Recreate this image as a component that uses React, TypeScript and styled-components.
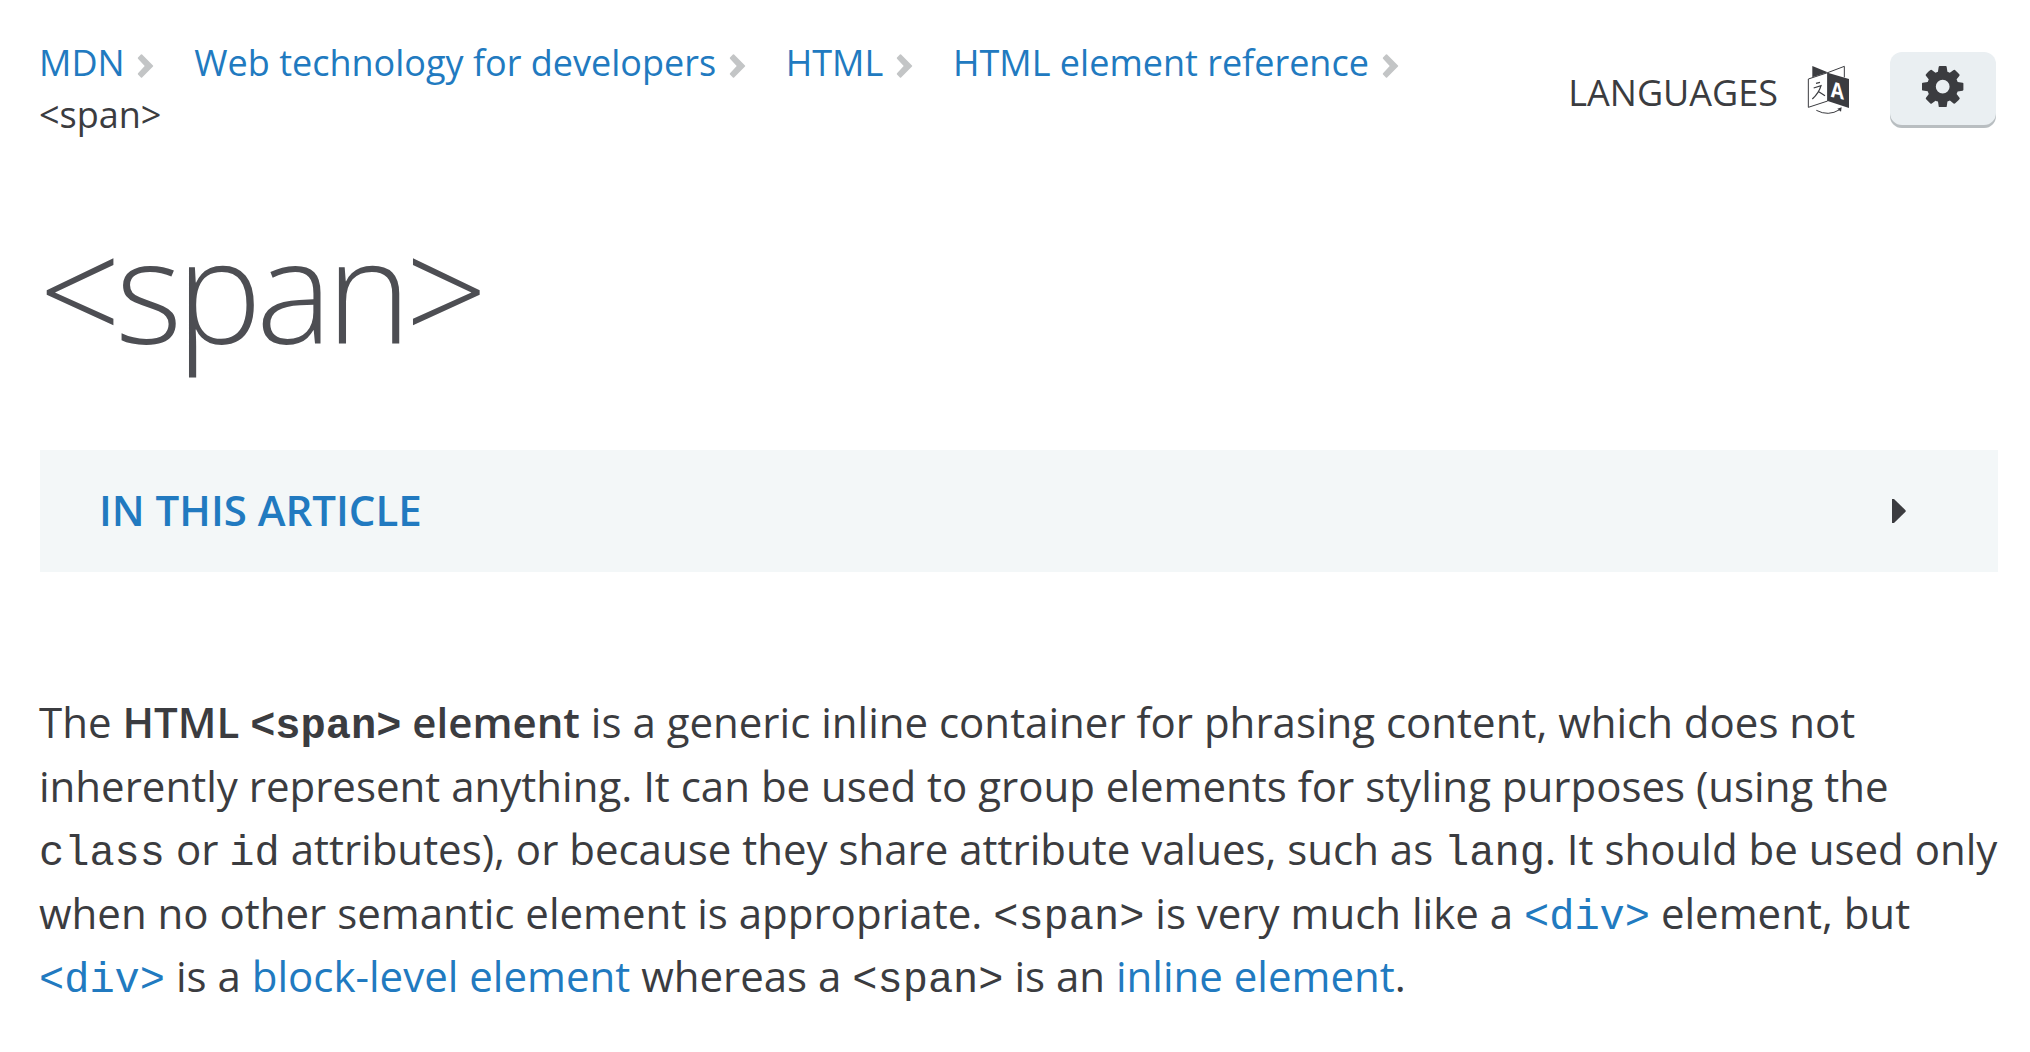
import React from "react";
import styled, { createGlobalStyle } from "styled-components";

const ink = "#3b3c40";
const blue = "#217ac0";

const Global = createGlobalStyle`
  * { box-sizing: border-box; }
  body { margin: 0; background: #fff; color: ${ink}; font-family: "Open Sans", sans-serif; }
`;
const Page = styled.main`
  width: 2030px; height: 1052px; padding: 37px 32px 0 39px; overflow: hidden;
`;
const Header = styled.header`
  display: flex; justify-content: space-between; height: 179px;
`;
const Crumbs = styled.nav`
  font-size: 36px; line-height: 52px; white-space: nowrap;
`;
const CrumbRow = styled.div`display: flex; align-items: center;`;
const Link = styled.a`color: ${blue}; text-decoration: none;`;
const Chevron = styled.svg`width: 17px; height: 24px; margin: 6px 40px 0 12.7px; fill: #c3c5c6;`;
const Tools = styled.div`display: flex; align-items: center; height: 76px; margin: 15px 2px 0 0;`;
const Language = styled.span`font-size: 36px; line-height: 76px; padding-top: 5px; margin-right: 29px;`;
const LangIcon = styled.svg`width: 43px; height: 50px; margin-right: 40px;`;
const GearButton = styled.button`
  width: 106px; height: 76px; border: 0; border-radius: 12px; box-shadow: inset 0 -3px 0 #b9bec1;
  background: #eaeff2; display: flex; align-items: center; justify-content: center; padding: 0 0 7px;
`;
const Gear = styled.svg`width: 41.4px; height: 41.4px; fill: ${ink};`;
const Title = styled.h1`
  margin: 0; height: 234px; font-size: 144px; font-weight: 300; line-height: 144px; letter-spacing: -6px; color: #4d4e53;
`;
const Toc = styled.section`
  height: 122px; margin-left: 1px; background: #f3f7f8; padding: 0 92px 0 59px; display: flex; align-items: center; justify-content: space-between;
`;
const TocTitle = styled.h2`margin: 0; padding-bottom: 3px; color: ${blue}; font-size: 42px; font-weight: 600;`;
const Arrow = styled.svg`width: 14px; height: 24px; fill: ${ink};`;
const Article = styled.p`
  margin: 118px 0 0; font-size: 42px; line-height: 63.5px; white-space: nowrap;
`;
const Strong = styled.strong`font-weight: 600;`;
const Code = styled.code`font-family: "Liberation Mono", monospace; font-size: 42px; line-height: 1;`;
const BoldCode = styled(Code)`font-weight: 700;`;

const crumbs = ["MDN", "Web technology for developers", "HTML", "HTML element reference"];

export default function App() {
  return (
    <Page>
      <Global />
      <Header>
        <Crumbs>
          <CrumbRow>
            {crumbs.map((crumb) => (
              <React.Fragment key={crumb}>
                <Link>{crumb}</Link>
                <Chevron viewBox="0 0 17 24"><path d="M1 3.500Q0.500 4 1 4.700L7.700 12 1 19.300Q0.500 20 1 20.500L3.900 23.400Q4.500 24 5.100 23.400L16 12.600Q16.500 12 16 11.400L5.100 0.600Q4.500 0 3.900 0.600Z" /></Chevron>
              </React.Fragment>
            ))}
          </CrumbRow>
          <div>&lt;span&gt;</div>
        </Crumbs>
        <Tools>
          <Language>LANGUAGES</Language>
          <LangIcon viewBox="51 42 129 150">
            <g fill={ink}>
              <path d="M67 45 113 64 67 79Z" />
              <path d="M113 65 177 84V171L113 150Z" />
              <path d="M142 173 155 169 153 182Z" />
            </g>
            <g fill="none" stroke={ink} strokeWidth="3">
              <path d="M113 65 163 46V79" />
              <path d="M55 84 113 65V150L55 169Z" />
              <path d="M79 178Q115 197 149 176" />
              <path d="M78 97 90 94M71 111 93 104Q87 126 67 144M84 121 105 134" strokeWidth="3.8" />
            </g>
            <text x="0" y="0" transform="matrix(.88 .2 0 1 122 137)" fill="#fff" fontFamily="Open Sans, sans-serif" fontSize="65" fontWeight="700">A</text>
          </LangIcon>
          <GearButton aria-label="Settings">
            <Gear viewBox="128 128 1536 1536">
              <path d="M1152 896q0-106-75-181t-181-75-181 75-75 181 75 181 181 75 181-75 75-181zm512-109v222q0 12-8 23t-20 13l-185 28q-19 54-39 91 35 50 107 138 10 12 10 25t-9 23q-27 37-99 108t-94 71q-12 0-26-9l-138-108q-44 23-91 38-16 136-29 186-7 28-36 28h-222q-14 0-24.5-8.5t-11.5-21.5l-28-184q-49-16-90-37l-141 107q-10 9-25 9-14 0-25-11-126-114-165-168-7-10-7-23 0-12 8-23 15-21 51-66.5t54-70.5q-27-50-41-99l-183-27q-13-2-21-12.5t-8-23.5v-222q0-12 8-23t19-13l186-28q14-46 39-92-40-57-107-138-10-12-10-24 0-10 9-23 26-36 98.5-107.5t94.5-71.5q13 0 26 10l138 107q44-23 91-38 16-136 29-186 7-28 36-28h222q14 0 24.5 8.5t11.5 21.5l28 184q49 16 90 37l142-107q9-9 24-9 13 0 25 10 129 119 165 170 7 8 7 22 0 12-8 23-15 21-51 66.5t-54 70.5q26 50 41 98l183 28q13 2 21 12.5t8 23.5z" />
            </Gear>
          </GearButton>
        </Tools>
      </Header>
      <Title>&lt;span&gt;</Title>
      <Toc>
        <TocTitle>IN THIS ARTICLE</TocTitle>
        <Arrow viewBox="0 0 14 24"><path d="M0 0H2L13.5 11.2Q14 12 13.5 12.8L2 24H0Z" /></Arrow>
      </Toc>
      <Article>
        The <Strong>HTML <BoldCode>&lt;span&gt;</BoldCode> element</Strong> is a generic inline container for phrasing content, which does not<br />
        inherently represent anything. It can be used to group elements for styling purposes (using the<br />
        <Code>class</Code> or <Code>id</Code> attributes), or because they share attribute values, such as <Code>lang</Code>. It should be used only<br />
        when no other semantic element is appropriate. <Code>&lt;span&gt;</Code> is very much like a <Link><Code>&lt;div&gt;</Code></Link> element, but<br />
        <Link><Code>&lt;div&gt;</Code></Link> is a <Link>block-level element</Link> whereas a <Code>&lt;span&gt;</Code> is an <Link>inline element</Link>.
      </Article>
    </Page>
  );
}
